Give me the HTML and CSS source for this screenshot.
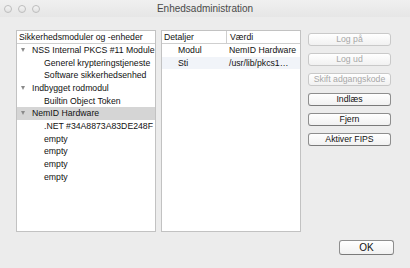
FILE: index.html
```html
<!DOCTYPE html>
<html lang="da">
<head>
  <meta charset="UTF-8">
  <title>Enhedsadministration</title>
  <link rel="stylesheet" href="styles.css">
</head>
<body>
  <div class="window">
    <div class="titlebar">
      <div class="lights">
        <span class="light"></span>
        <span class="light"></span>
        <span class="light"></span>
      </div>
      <div class="title">Enhedsadministration</div>
    </div>

    <div class="content">
      <div class="panel tree">
        <div class="head">Sikkerhedsmoduler og -enheder</div>
        <div class="row top"><span class="tri"></span>NSS Internal PKCS #11 Module</div>
        <div class="row child">Generel krypteringstjeneste</div>
        <div class="row child">Software sikkerhedsenhed</div>
        <div class="row top"><span class="tri"></span>Indbygget rodmodul</div>
        <div class="row child">Builtin Object Token</div>
        <div class="row top selected"><span class="tri"></span>NemID Hardware</div>
        <div class="row child">.NET #34A8873A83DE248F</div>
        <div class="row child">empty</div>
        <div class="row child">empty</div>
        <div class="row child">empty</div>
        <div class="row child">empty</div>
      </div>

      <div class="panel details">
        <div class="dhead">
          <div class="col1">Detaljer</div>
          <div class="col2">Værdi</div>
        </div>
        <div class="drow">
          <div class="col1">Modul</div>
          <div class="col2">NemID Hardware</div>
        </div>
        <div class="drow alt">
          <div class="col1">Sti</div>
          <div class="col2">/usr/lib/pkcs1…</div>
        </div>
      </div>

      <div class="buttons">
        <button class="btn" disabled>Log på</button>
        <button class="btn" disabled>Log ud</button>
        <button class="btn" disabled>Skift adgangskode</button>
        <button class="btn">Indlæs</button>
        <button class="btn">Fjern</button>
        <button class="btn">Aktiver FIPS</button>
      </div>
    </div>

    <div class="footer">
      <button class="btn ok">OK</button>
    </div>
  </div>
</body>
</html>
```

FILE: styles.css
```css
* {
  box-sizing: border-box;
  margin: 0;
  padding: 0;
}

body {
  font-family: "Liberation Sans", Arial, sans-serif;
  font-size: 8.7px;
  color: #111;
  background: #ececec;
}

.window {
  width: 410px;
  height: 268px;
  background: #ececec;
  display: flex;
  flex-direction: column;
}

.titlebar {
  height: 17px;
  display: flex;
  align-items: center;
  background: linear-gradient(#f0f0f0, #e6e6e6);
  position: relative;
}

.lights {
  display: flex;
  gap: 6px;
  padding-left: 4px;
}

.light {
  width: 8px;
  height: 8px;
  border-radius: 50%;
  border: 1px solid #bdbdbd;
  background: linear-gradient(#f4f4f4, #e2e2e2);
}

.title {
  position: absolute;
  left: 0;
  right: 0;
  top: 3px;
  text-align: center;
  font-size: 10px;
  color: #4a4a4a;
}

.content {
  display: flex;
  padding: 13px 0 0 16px;
}

.panel {
  width: 140px;
  height: 202px;
  background: #fff;
  border: 1px solid #c2c2c2;
}

.head,
.dhead {
  height: 13px;
  line-height: 12px;
  border-bottom: 1px solid #cfcfcf;
}

.head {
  padding-left: 2px;
}

.row {
  height: 12.67px;
  line-height: 12.67px;
  white-space: nowrap;
  overflow: hidden;
}

.row.top {
  padding-left: 4px;
}

.row.child {
  padding-left: 27px;
}

.row.selected {
  background: #d5d5d5;
}

.tri {
  display: inline-block;
  width: 0;
  height: 0;
  border-left: 2.5px solid transparent;
  border-right: 2.5px solid transparent;
  border-top: 4px solid #8a8a8a;
  margin-right: 7px;
  vertical-align: 1px;
}

.details {
  margin-left: 5px;
}

.dhead,
.drow {
  display: grid;
  grid-template-columns: 65px 1fr;
}

.dhead .col1 {
  padding-left: 2px;
  border-right: 1px solid #cfcfcf;
}

.dhead .col2 {
  padding-left: 3px;
}

.drow {
  height: 12.67px;
  line-height: 12.67px;
  white-space: nowrap;
}

.drow .col1 {
  padding-left: 16px;
}

.drow .col2 {
  padding-left: 2px;
  overflow: hidden;
}

.drow.alt {
  background: #f1f4f9;
}

.buttons {
  margin-left: 7px;
  padding-top: 3px;
  display: flex;
  flex-direction: column;
  gap: 7px;
}

.btn {
  width: 83px;
  height: 13px;
  font-family: inherit;
  font-size: 8.7px;
  line-height: 11px;
  color: #111;
  background: linear-gradient(#ffffff, #f1f1f1);
  border: 1px solid #8e8e8e;
  border-bottom-color: #7a7a7a;
  border-radius: 3px;
  white-space: nowrap;
}

.btn:disabled {
  color: #a8a8a8;
  border-color: #c9c9c9;
}

.footer {
  display: flex;
  justify-content: flex-end;
  padding: 8px 16px 0 0;
}

.btn.ok {
  width: 55px;
  height: 15px;
  font-size: 10px;
  line-height: 13px;
}
```
